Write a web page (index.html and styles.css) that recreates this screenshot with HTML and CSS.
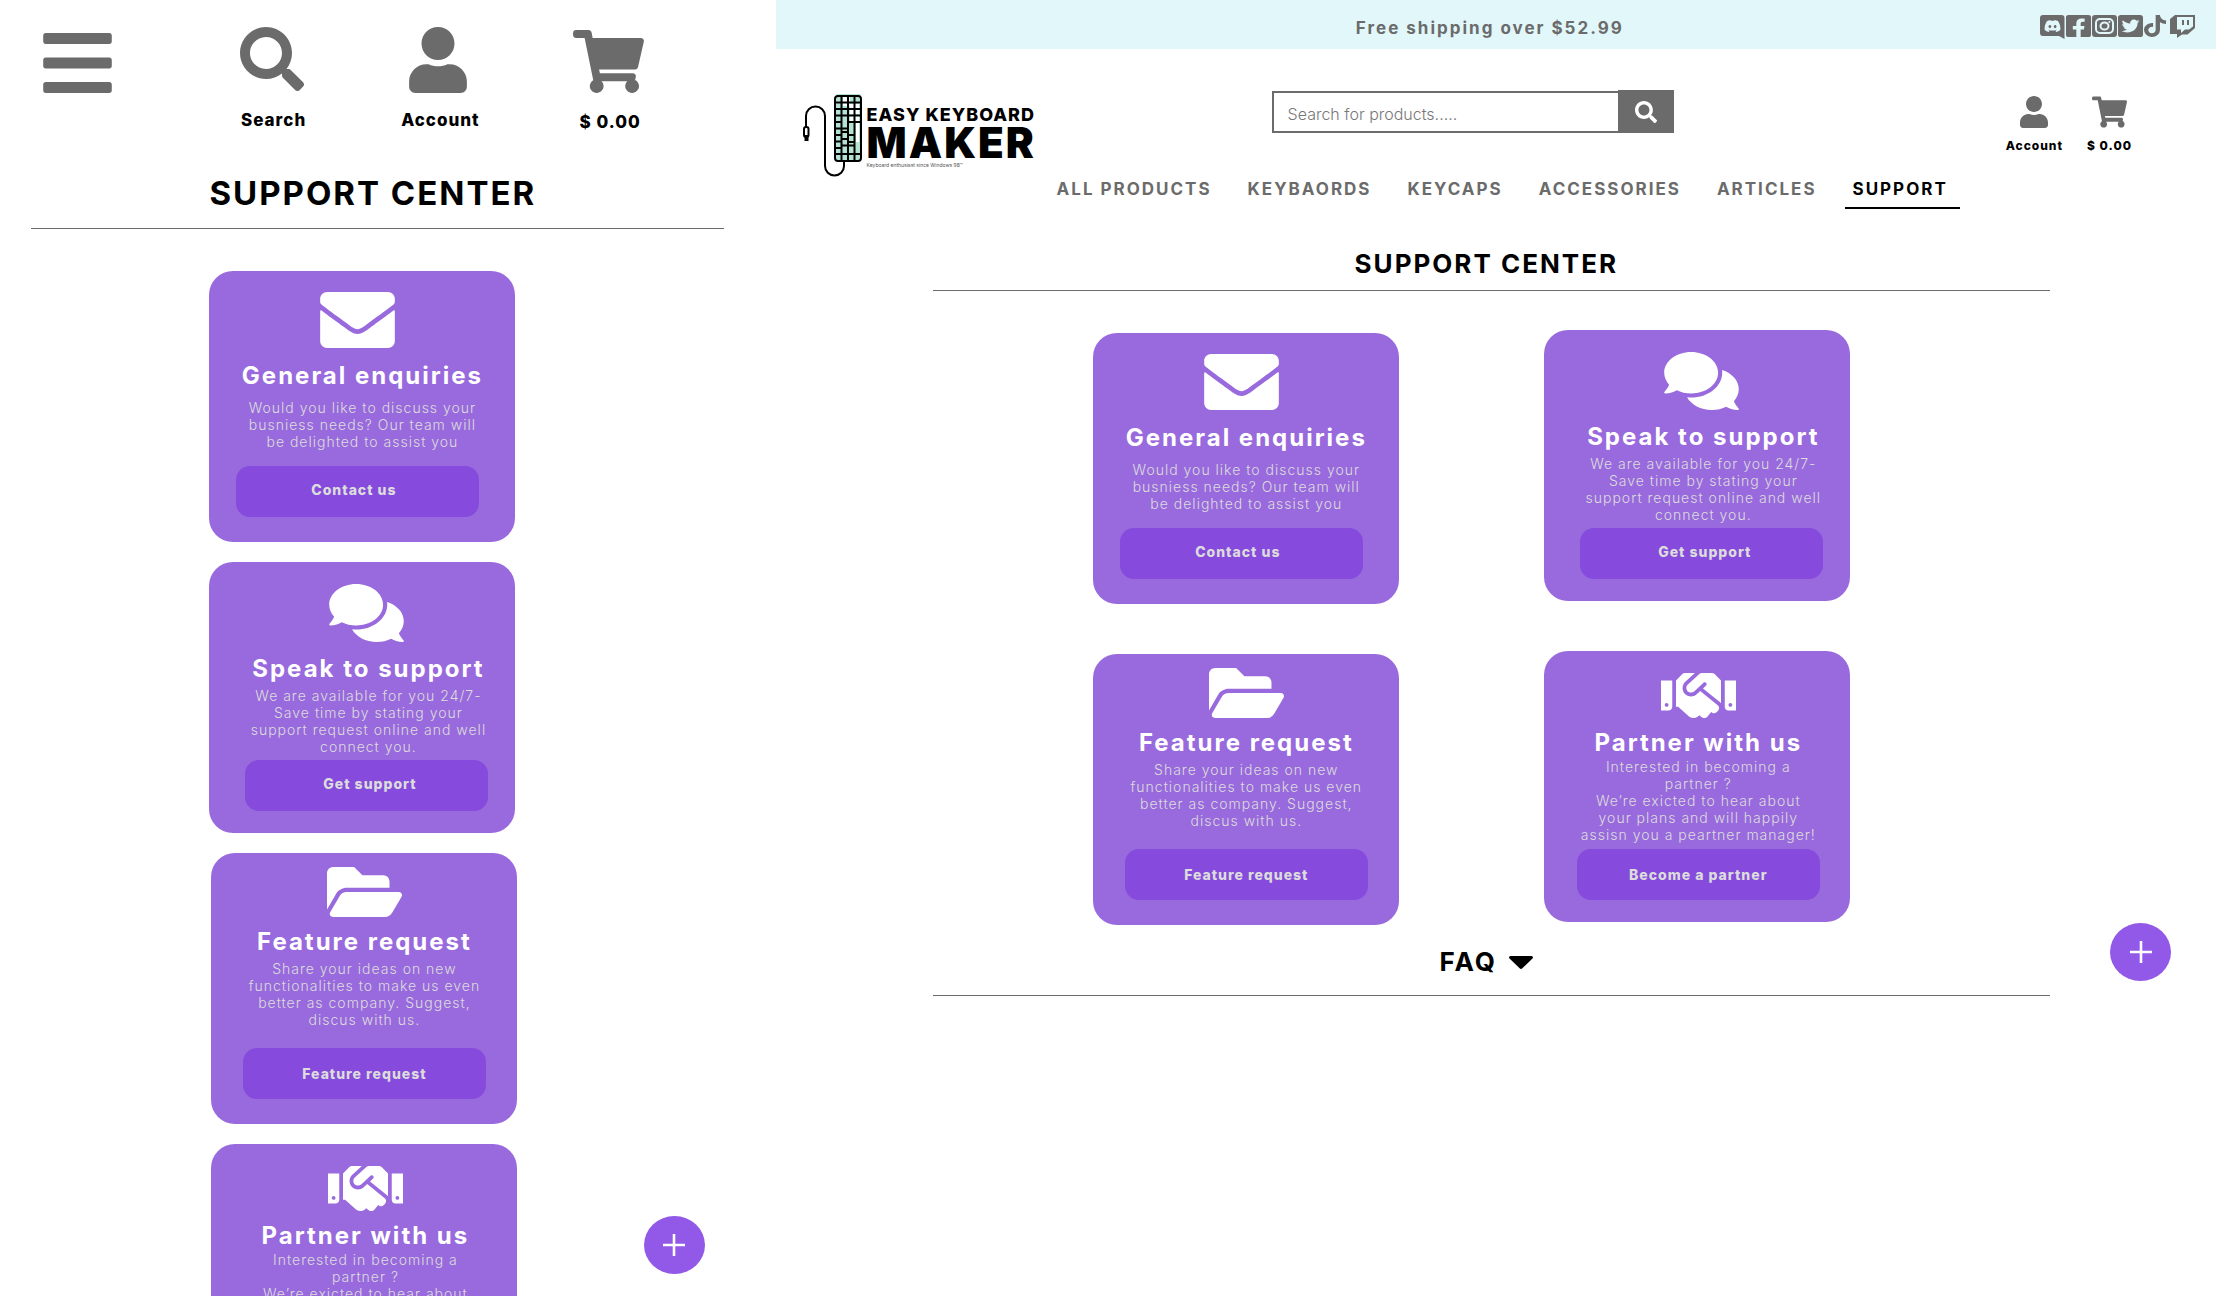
FILE: index.html
```html
<!DOCTYPE html>
<html lang="en">
<head>
<meta charset="utf-8">
<meta name="viewport" content="width=device-width, initial-scale=1">
<title>Support Center - Easy Keyboard Maker</title>
<link rel="stylesheet" href="styles.css">
</head>
<body>
<svg class="sprite" aria-hidden="true">
  <symbol id="bars" viewBox="0 60 448 392"><path d="M16 132h416c8.837 0 16-7.163 16-16V76c0-8.837-7.163-16-16-16H16C7.163 60 0 67.163 0 76v40c0 8.837 7.163 16 16 16zm0 160h416c8.837 0 16-7.163 16-16v-40c0-8.837-7.163-16-16-16H16c-8.837 0-16 7.163-16 16v40c0 8.837 7.163 16 16 16zm0 160h416c8.837 0 16-7.163 16-16v-40c0-8.837-7.163-16-16-16H16c-8.837 0-16 7.163-16 16v40c0 8.837 7.163 16 16 16z"/></symbol>
  <symbol id="search" viewBox="0 0 512 512"><path d="M505 442.7L405.3 343c-4.500-4.500-10.600-7-17-7H372c27.600-35.300 44-79.700 44-128C416 93.100 322.900 0 208 0S0 93.100 0 208s93.100 208 208 208c48.300 0 92.700-16.400 128-44v16.300c0 6.400 2.500 12.500 7 17l99.700 99.700c9.400 9.400 24.600 9.400 33.900 0l28.300-28.300c9.400-9.400 9.400-24.600.1-34zM208 336c-70.700 0-128-57.200-128-128 0-70.700 57.200-128 128-128 70.700 0 128 57.200 128 128 0 70.700-57.200 128-128 128z"/></symbol>
  <symbol id="user" viewBox="0 0 448 512"><path d="M224 256c70.7 0 128-57.3 128-128S294.7 0 224 0 96 57.3 96 128s57.3 128 128 128zm89.6 32h-16.7c-22.2 10.2-46.9 16-72.9 16s-50.6-5.8-72.900-16h-16.700C60.200 288 0 348.200 0 422.400V464c0 26.500 21.500 48 48 48h352c26.500 0 48-21.500 48-48v-41.600c0-74.200-60.200-134.400-134.400-134.400z"/></symbol>
  <symbol id="cart" viewBox="0 0 576 512"><path d="M528.12 301.319l47.273-208C578.806 78.301 567.391 64 551.99 64H159.208l-9.166-44.81C147.758 8.021 137.93 0 126.529 0H24C10.745 0 0 10.745 0 24v16c0 13.255 10.745 24 24 24h69.883l70.248 343.435C147.325 417.1 136 435.222 136 456c0 30.928 25.072 56 56 56s56-25.072 56-56c0-15.674-6.447-29.835-16.824-40h209.647C430.447 426.165 424 440.326 424 456c0 30.928 25.072 56 56 56s56-25.072 56-56c0-22.172-12.888-41.332-31.579-50.405l5.517-24.276c3.413-15.018-8.002-29.319-23.403-29.319H218.117l-6.545-32h293.145c11.206 0 20.92-7.754 23.403-18.681z"/></symbol>
  <symbol id="envelope" viewBox="0 64 512 384"><path d="M502.3 190.8c3.9-3.1 9.7-.2 9.7 4.7V400c0 26.5-21.5 48-48 48H48c-26.5 0-48-21.5-48-48V195.6c0-5 5.7-7.8 9.7-4.7 22.4 17.4 52.1 39.5 154.1 113.6 21.1 15.4 56.7 47.8 92.2 47.6 35.7.3 72-32.8 92.3-47.6 102-74.1 131.6-96.3 154-113.700zM256 320c23.200.4 56.600-29.200 73.400-41.400 132.700-96.300 142.800-104.700 173.400-128.700 5.800-4.500 9.200-11.500 9.200-18.900v-19c0-26.500-21.500-48-48-48H48c-26.500 0-48 21.500-48 48v19c0 7.400 3.400 14.300 9.200 18.900 30.600 23.900 40.700 32.400 173.400 128.700 16.800 12.200 50.200 41.800 73.400 41.400z"/></symbol>
  <symbol id="comments" viewBox="0 32 576 448"><path d="M416 192c0-88.4-93.1-160-208-160S0 103.6 0 192c0 34.3 14.1 65.9 38 92-13.4 30.2-35.5 54.2-35.8 54.5-2.2 2.3-2.8 5.7-1.5 8.7S4.8 352 8 352c36.600 0 66.900-12.300 88.700-25 32.200 15.700 70.300 25 111.300 25 114.900 0 208-71.600 208-160zm122 220c23.900-26 38-57.700 38-92 0-66.900-53.500-124.200-129.300-148.100.9 6.600 1.300 13.300 1.300 20.100 0 105.900-107.700 192-240 192-10.800 0-21.300-.8-31.700-1.900C207.800 439.600 281.800 480 368 480c41 0 79.100-9.200 111.300-25 21.800 12.700 52.100 25 88.700 25 3.200 0 6.100-1.900 7.300-4.800 1.300-2.900.7-6.300-1.500-8.700-.3-.3-22.400-24.200-35.800-54.500z"/></symbol>
  <symbol id="folder" viewBox="0 64 576 384"><path d="M572.694 292.093L500.27 416.248A63.997 63.997 0 0 1 444.989 448H45.025c-18.523 0-30.064-20.093-20.731-36.093l72.424-124.155A64 64 0 0 1 152 256h399.964c18.523 0 30.064 20.093 20.73 36.093zM152 224h328v-48c0-26.51-21.49-48-48-48H272l-64-64H48C21.49 64 0 85.49 0 112v278.046l69.077-118.418C86.214 242.25 117.989 224 152 224z"/></symbol>
  <symbol id="handshake" viewBox="0 64 640 384"><path d="M434.7 64h-85.9c-8 0-15.7 3-21.6 8.4l-98.3 90c-.1.1-.2.3-.3.4-16.6 15.6-16.3 40.5-2.1 56 12.7 13.9 39.4 17.6 56.1 2.7.1-.1.3-.1.4-.2l79.9-73.2c6.5-5.9 16.7-5.5 22.6 1 6 6.5 5.5 16.6-1 22.6l-26.1 23.9L504 313.8c2.9 2.4 5.5 5 7.9 7.7V128l-54.6-54.6c-5.9-6-14.1-9.4-22.6-9.4zM544 128.2v223.9c0 17.7 14.3 32 32 32h64V128.2h-96zm48 223.9c-8.8 0-16-7.2-16-16s7.2-16 16-16 16 7.2 16 16-7.2 16-16 16zM0 384h64c17.7 0 32-14.3 32-32V128.2H0V384zm48-63.9c8.8 0 16 7.2 16 16s-7.2 16-16 16-16-7.2-16-16c0-8.9 7.2-16 16-16zm435.9 18.6L334.6 217.5l-30 27.5c-29.7 27.1-75.2 24.5-101.7-4.4-26.9-29.4-24.8-74.9 4.4-101.7L289.1 64h-83.8c-8.5 0-16.6 3.4-22.6 9.4L128 128v223.9h18.3l90.5 81.9c27.4 22.3 67.7 18.1 90-9.3l.2-.2 17.9 15.5c15.9 13 39.4 10.5 52.3-5.4l31.4-38.6 5.4 4.4c13.7 11.1 33.9 9.1 45-4.7l9.5-11.7c11.2-13.8 9.1-33.9-4.6-45.1z"/></symbol>
  <symbol id="caret" viewBox="11 192 298 169" preserveAspectRatio="none"><path d="M31.3 192h257.3c17.8 0 26.7 21.5 14.1 34.1L174.1 354.8c-7.8 7.8-20.5 7.8-28.3 0L17.2 226.1C4.6 213.5 13.5 192 31.3 192z"/></symbol>
  <symbol id="plus" viewBox="0 0 22 22"><path d="M9.700 0h2.600v9.700H22v2.600h-9.700V22H9.700v-9.700H0V9.700h9.700z"/></symbol>
</svg>

<div class="layout">
  <section class="pane pane--compact" aria-label="Compact view">
    <div class="pane__body">
      <header class="toolbar">
        <button class="tool tool--menu" type="button" aria-label="Menu"><svg width="69" height="60"><use href="#bars"/></svg></button>
        <a class="tool tool--search" href="#search"><svg width="64" height="64"><use href="#search"/></svg><span>Search</span></a>
        <a class="tool tool--account" href="#account"><svg width="58" height="66"><use href="#user"/></svg><span>Account</span></a>
        <a class="tool tool--cart" href="#cart"><svg width="71" height="63"><use href="#cart"/></svg><span>$ 0.00</span></a>
      </header>
      <h1 class="heading heading--large">SUPPORT CENTER</h1>
      <hr class="rule">
      <div class="cards cards--stack">
        <article class="card card--contact">
          <svg class="card__icon" width="75" height="56"><use href="#envelope"/></svg>
          <h2 class="card__title">General enquiries</h2>
          <p class="card__text">Would you like to discuss your<br>busniess needs? Our team will<br>be delighted to assist you</p>
          <button class="card__button" type="button">Contact us</button>
        </article>
        <article class="card card--support">
          <svg class="card__icon" width="75" height="58"><use href="#comments"/></svg>
          <h2 class="card__title">Speak to support</h2>
          <p class="card__text">We are available for you 24/7-<br>Save time by stating your<br>support request online and well<br>connect you.</p>
          <button class="card__button" type="button">Get support</button>
        </article>
        <article class="card card--feature">
          <svg class="card__icon" width="75" height="50"><use href="#folder"/></svg>
          <h2 class="card__title">Feature request</h2>
          <p class="card__text">Share your ideas on new<br>functionalities to make us even<br>better as company. Suggest,<br>discus with us.</p>
          <button class="card__button" type="button">Feature request</button>
        </article>
        <article class="card card--partner">
          <svg class="card__icon" width="75" height="45"><use href="#handshake"/></svg>
          <h2 class="card__title">Partner with us</h2>
          <p class="card__text">Interested in becoming a<br>partner ?<br>We’re exicted to hear about<br>your plans and will happily<br>assisn you a peartner manager!</p>
          <button class="card__button" type="button">Become a partner</button>
        </article>
      </div>
    </div>
    <button class="fab fab--compact" type="button" aria-label="Add"><svg width="22" height="22"><use href="#plus"/></svg></button>
  </section>

  <section class="pane pane--wide" aria-label="Wide view">
    <div class="banner">
      <p class="banner__text">Free shipping over $52.99</p>
      <nav class="social" aria-label="Social media">
        <a href="#discord" aria-label="Discord"><svg width="25" height="24" viewBox="0 0 25 24"><path d="M3 0h18.500a3 3 0 0 1 3 3v21l-5.500-3H3a3 3 0 0 1-3-3V3a3 3 0 0 1 3-3z"/><svg x="4" y="5" width="17" height="12" viewBox="20 32 600 448"><path class="social__cut" d="M524.531,69.836a1.5,1.5,0,0,0-.764-.7A485.065,485.065,0,0,0,404.081,32.03a1.816,1.816,0,0,0-1.923.91,337.461,337.461,0,0,0-14.9,30.6,447.848,447.848,0,0,0-134.426,0,309.541,309.541,0,0,0-15.135-30.6,1.89,1.89,0,0,0-1.924-.91A483.689,483.689,0,0,0,116.085,69.137a1.712,1.712,0,0,0-.788.676C39.068,183.651,18.186,294.69,28.43,404.354a2.016,2.016,0,0,0,.765,1.375A487.666,487.666,0,0,0,176.02,479.918a1.9,1.9,0,0,0,2.063-.676A348.2,348.2,0,0,0,208.12,430.4a1.86,1.86,0,0,0-1.019-2.588,321.173,321.173,0,0,1-45.868-21.853,1.885,1.885,0,0,1-.185-3.126c3.082-2.309,6.166-4.711,9.109-7.137a1.819,1.819,0,0,1,1.9-.256c96.229,43.917,200.41,43.917,295.5,0a1.812,1.812,0,0,1,1.924.233c2.944,2.426,6.027,4.851,9.132,7.16a1.884,1.884,0,0,1-.162,3.126,301.407,301.407,0,0,1-45.89,21.83,1.875,1.875,0,0,0-1,2.611,391.055,391.055,0,0,0,30.014,48.815,1.864,1.864,0,0,0,2.063.7A486.048,486.048,0,0,0,610.7,405.729a1.882,1.882,0,0,0,.765-1.352C623.729,277.594,590.933,167.465,524.531,69.836ZM222.491,337.58c-28.972,0-52.844-26.587-52.844-59.239S193.056,219.1,222.491,219.1c29.665,0,53.306,26.82,52.843,59.239C275.334,310.993,251.924,337.58,222.491,337.58Zm195.38,0c-28.971,0-52.843-26.587-52.843-59.239S388.437,219.1,417.871,219.1c29.667,0,53.307,26.82,52.844,59.239C470.715,310.993,447.538,337.58,417.871,337.58Z"/></svg></svg></a>
        <a href="#facebook" aria-label="Facebook"><svg width="25" height="22" viewBox="0 32 448 448" preserveAspectRatio="none"><path d="M400 32H48A48 48 0 0 0 0 80v352a48 48 0 0 0 48 48h137.25V327.69h-63V256h63v-54.64c0-62.15 37-96.48 93.67-96.48 27.14 0 55.52 4.84 55.52 4.84v61h-31.27c-30.81 0-40.42 19.12-40.42 38.73V256h68.78l-11 71.69h-57.78V480H400a48 48 0 0 0 48-48V80a48 48 0 0 0-48-48z"/></svg></a>
        <a href="#instagram" aria-label="Instagram"><svg width="25" height="22" viewBox="0 0 25 22"><rect width="25" height="22" rx="3"/><rect class="social__line" x="4" y="4" width="17" height="14" rx="4"/><ellipse class="social__line" cx="12.500" cy="11" rx="4" ry="3.600"/><circle class="social__cut" cx="17.300" cy="7" r="1"/></svg></a>
        <a href="#twitter" aria-label="Twitter"><svg width="25" height="22" viewBox="0 32 448 448" preserveAspectRatio="none"><path d="M400 32H48C21.5 32 0 53.5 0 80v352c0 26.5 21.5 48 48 48h352c26.5 0 48-21.5 48-48V80c0-26.5-21.5-48-48-48zm-48.900 158.800c.2 2.800.2 5.700.2 8.500 0 86.700-66 186.600-186.600 186.600-37.200 0-71.700-10.800-100.700-29.400 5.300.6 10.400.8 15.800.8 30.700 0 58.900-10.400 81.400-28-28.800-.6-53-19.500-61.300-45.500 10.100 1.500 19.200 1.500 29.600-1.200-30-6.100-52.500-32.500-52.500-64.400v-.8c8.700 4.900 18.900 7.900 29.600 8.300a65.447 65.447 0 0 1-29.200-54.600c0-12.200 3.200-23.400 8.900-33.100 32.300 39.800 80.800 65.800 135.200 68.600-9.300-44.500 24-80.600 64-80.600 18.900 0 35.900 7.900 47.900 20.700 14.800-2.800 29-8.300 41.600-15.800-4.900 15.200-15.200 28-28.800 36.100 13.200-1.400 26-5.100 37.800-10.200-8.900 13.100-20.100 24.700-32.900 34z"/></svg></a>
        <a href="#tiktok" aria-label="TikTok"><svg width="22" height="22" viewBox="0 0 448 512" preserveAspectRatio="none"><path d="M448,209.91a210.06,210.06,0,0,1-122.77-39.25V349.38A162.55,162.55,0,1,1,185,188.31V278.2a74.62,74.62,0,1,0,52.23,71.18V0l88,0a121.18,121.18,0,0,0,1.86,22.17h0A122.18,122.18,0,0,0,381,102.39a121.43,121.43,0,0,0,67,20.14Z"/></svg></a>
        <a href="#twitch" aria-label="Twitch"><svg width="28" height="24" viewBox="-3 0 28 24"><path fill-rule="evenodd" d="M0 4l5-4h20v13l-7.500 6.500H12L7 23v-4H0zM7 2v12.500h4v3.500l4-3.500h4l4-3V2zM12 5h2v5h-2zM17 5h2v5h-2z"/></svg></a>
      </nav>
    </div>

    <header class="header">
      <a class="logo" href="#home">
        <svg class="logo__art" width="61" height="84" viewBox="0 0 61 84">
          <rect class="logo__mint" x="33" y="0" width="25" height="66" rx="2"/>
          <path class="logo__paper" d="M40 2h7v8h9v10h-9v-8h-7zM52 22h4v26h-3V28h-6v-6z"/>
          <path class="logo__grid" d="M32 8.500h26M32 15h26M32 21.500h26M32 28h7M45 28h13M32 34.500h13M32 41h7M39 38h6M45 41h7M32 47.500h7M39 45h6M45 48h7M32 54h7M39 51.500h13M32 60h26M38.500 2v65M45 2v65M51.500 2v65"/>
          <rect class="logo__frame" x="32" y="2" width="26" height="65" rx="3"/>
          <path class="logo__cable" d="M3 33V22a9.500 9.500 0 0 1 19 0v50a9.500 9.500 0 0 0 19 0v-4"/>
          <rect class="logo__cable" x="1" y="33" width="4.500" height="10" rx="2"/>
          <path d="M1.500 41h4v6h-4z"/>
        </svg>
        <span class="logo__words">
          <span class="logo__top">EASY KEYBOARD</span>
          <span class="logo__main">MAKER</span>
          <span class="logo__tag">Keyboard enthusiast since Windows 98™</span>
        </span>
      </a>
      <form class="search" role="search">
        <input class="search__input" type="search" aria-label="Search for products" placeholder="Search for products.....">
        <button class="search__button" type="submit" aria-label="Search"><svg width="22" height="22"><use href="#search"/></svg></button>
      </form>
      <div class="actions">
        <a class="action" href="#account"><svg width="28" height="32"><use href="#user"/></svg><span>Account</span></a>
        <a class="action" href="#cart"><svg width="35" height="32"><use href="#cart"/></svg><span>$ 0.00</span></a>
      </div>
      <nav class="menu" aria-label="Main">
        <a class="menu__link" href="#products">ALL PRODUCTS</a>
        <a class="menu__link" href="#keyboards">KEYBAORDS</a>
        <a class="menu__link" href="#keycaps">KEYCAPS</a>
        <a class="menu__link" href="#accessories">ACCESSORIES</a>
        <a class="menu__link" href="#articles">ARTICLES</a>
        <a class="menu__link menu__link--current" href="#support" aria-current="page">SUPPORT</a>
      </nav>
    </header>

    <main class="content">
      <h1 class="heading">SUPPORT CENTER</h1>
      <hr class="rule">
      <div class="cards cards--grid">
        <div class="cards__column">
          <article class="card card--contact">
            <svg class="card__icon" width="75" height="56"><use href="#envelope"/></svg>
            <h2 class="card__title">General enquiries</h2>
            <p class="card__text">Would you like to discuss your<br>busniess needs? Our team will<br>be delighted to assist you</p>
            <button class="card__button" type="button">Contact us</button>
          </article>
          <article class="card card--feature">
            <svg class="card__icon" width="75" height="50"><use href="#folder"/></svg>
            <h2 class="card__title">Feature request</h2>
            <p class="card__text">Share your ideas on new<br>functionalities to make us even<br>better as company. Suggest,<br>discus with us.</p>
            <button class="card__button" type="button">Feature request</button>
          </article>
        </div>
        <div class="cards__column">
          <article class="card card--support">
            <svg class="card__icon" width="75" height="58"><use href="#comments"/></svg>
            <h2 class="card__title">Speak to support</h2>
            <p class="card__text">We are available for you 24/7-<br>Save time by stating your<br>support request online and well<br>connect you.</p>
            <button class="card__button" type="button">Get support</button>
          </article>
          <article class="card card--partner">
            <svg class="card__icon" width="75" height="45"><use href="#handshake"/></svg>
            <h2 class="card__title">Partner with us</h2>
            <p class="card__text">Interested in becoming a<br>partner ?<br>We’re exicted to hear about<br>your plans and will happily<br>assisn you a peartner manager!</p>
            <button class="card__button" type="button">Become a partner</button>
          </article>
        </div>
      </div>
      <button class="heading faq" type="button" aria-expanded="false">FAQ<svg width="24" height="13"><use href="#caret"/></svg></button>
      <hr class="rule">
    </main>
    <button class="fab fab--wide" type="button" aria-label="Add"><svg width="22" height="22"><use href="#plus"/></svg></button>
  </section>
</div>
</body>
</html>
```
FILE: styles.css
```css
* {
  box-sizing: border-box;
}

:root {
  --grey: #6b6b6b;
  --ice: #e1f7fa;
  --violet: #996add;
  --violet-deep: #864bdc;
  --violet-bright: #9258e8;
}

body {
  margin: 0;
  background: #fff;
  color: #000;
  font-family: Inter, "Liberation Sans", sans-serif;
}

h1, h2, p {
  margin: 0;
}

a {
  color: inherit;
  text-decoration: none;
}

button {
  padding: 0;
  border: 0;
  background: none;
  color: inherit;
  font: inherit;
  cursor: pointer;
}

svg {
  display: block;
  flex: none;
  fill: currentColor;
}

.sprite {
  position: absolute;
  width: 0;
  height: 0;
}

.layout {
  display: grid;
  grid-template-columns: 35fr 65fr;
  height: 100vh;
}

.pane {
  position: relative;
  min-width: 0;
  min-height: 0;
}

.pane__body {
  height: 100%;
  overflow: hidden auto;
  scrollbar-width: none;
}

/* Compact view */
.toolbar {
  display: flex;
  align-items: flex-start;
  padding: 27px 0 0 43px;
}

.tool {
  display: flex;
  flex-direction: column;
  align-items: center;
  gap: 18px;
  color: var(--grey);
}

.tool span {
  padding-left: 4px;
  color: #000;
  font-size: 17px;
  font-weight: 800;
  line-height: 22px;
  letter-spacing: 1px;
}

.tool--menu {
  margin-top: 6px;
}

.tool--search {
  margin-left: 125px;
}

.tool--account {
  gap: 16px;
  margin-left: 91px;
}

.tool--cart {
  margin: 3px 0 0 93px;
}

.heading {
  font-size: 26px;
  font-weight: 700;
  line-height: 32px;
  letter-spacing: 2px;
  text-align: center;
}

.heading--large {
  margin-top: 40px;
  padding-right: 30px;
  font-size: 33px;
  line-height: 40px;
}

.rule {
  margin: 0;
  border: 0;
  border-top: 1px solid var(--grey);
}

.pane--compact .rule {
  margin: 15px 52px 0 31px;
}

.cards--stack {
  display: flex;
  flex-direction: column;
  gap: 20px;
  margin: 42px 0 20px 27%;
}

.cards--stack .card--feature,
.cards--stack .card--partner {
  margin-left: 2px;
}

/* Cards */
.card {
  display: flex;
  flex-direction: column;
  align-items: center;
  width: 306px;
  height: 271px;
  border-radius: 24px;
  background: var(--violet);
  color: #fff;
}

.card__title {
  font-size: 24px;
  font-weight: 700;
  line-height: 30px;
  letter-spacing: 2px;
  white-space: nowrap;
}

.card__text {
  color: #dcdcdc;
  font-size: 14px;
  font-weight: 300;
  line-height: 17px;
  letter-spacing: 1px;
  text-align: center;
  white-space: nowrap;
}

.card__button {
  width: 243px;
  height: 51px;
  margin-top: auto;
  border-radius: 14px;
  background: var(--violet-deep);
  color: #dcdcdc;
  font-size: 14px;
  font-weight: 800;
  letter-spacing: 1px;
}

.card--contact {
  padding: 21px 0 25px;
}

.card--support {
  padding: 22px 0 22px 12px;
}

.card--feature {
  padding: 14px 0 25px;
}

.card--partner {
  padding: 22px 0 22px 2px;
}

.card--contact .card__icon {
  margin: 0 9px 13px 0;
}

.card--support .card__icon {
  margin: 0 3px 12px 0;
}

.card--feature .card__icon,
.card--partner .card__icon {
  margin-bottom: 10px;
}

.card--contact .card__button {
  margin-right: 9px;
  padding: 0 8px 5px 0;
}

.card--support .card__button {
  margin-right: 3px;
  padding: 0 0 5px 6px;
}

.card--contact .card__text {
  margin-top: 8px;
}

.card--support .card__text,
.card--feature .card__text {
  margin-top: 3px;
}

/* Wide view */
.banner {
  display: grid;
  grid-template-columns: 1fr auto 1fr;
  align-items: center;
  height: 49px;
  padding: 0 21px 0 9px;
  background: var(--ice);
  color: var(--grey);
}

.banner__text {
  grid-column: 2;
  padding-top: 6px;
  font-size: 17px;
  font-weight: 700;
  line-height: 24px;
  letter-spacing: 2px;
}

.social {
  display: flex;
  justify-content: flex-end;
  gap: 1px;
  padding-top: 4px;
}

.social__cut {
  fill: var(--ice);
}

.social__line {
  fill: none;
  stroke: var(--ice);
  stroke-width: 2;
}

.header {
  display: grid;
  grid-template-columns: auto 1fr auto;
  grid-template-rows: 61px auto;
  align-items: start;
  row-gap: 26px;
  padding: 41px 84px 0 27px;
}

.logo {
  display: flex;
  grid-row: 1 / 3;
  gap: 3px;
  width: 246px;
  padding-top: 4px;
}

.logo__mint {
  fill: #b4e2d4;
}

.logo__paper {
  fill: #fff;
}

.logo__grid,
.logo__frame,
.logo__cable {
  fill: none;
  stroke: #000;
  stroke-width: 2;
}

.logo__words {
  display: flex;
  flex-direction: column;
  padding-top: 12px;
  white-space: nowrap;
}

.logo__top {
  font-size: 18px;
  font-weight: 800;
  line-height: 18px;
  letter-spacing: 1px;
}

.logo__main {
  font-size: 42px;
  font-weight: 900;
  line-height: 38px;
  letter-spacing: 2px;
}

.logo__tag {
  color: #555;
  font-size: 5px;
  line-height: 6px;
}

.search {
  display: flex;
  align-items: flex-end;
  width: 402px;
  margin-left: 223px;
}

.search__input {
  flex: 1;
  min-width: 0;
  height: 42px;
  padding: 4px 14px 0;
  border: 2px solid var(--grey);
  border-right: 0;
  border-radius: 0;
  background: #fff;
  font: 300 16px/20px Inter, "Liberation Sans", sans-serif;
  appearance: none;
}

.search__input::placeholder {
  color: #777;
}

.search__button {
  display: grid;
  place-items: center;
  width: 56px;
  height: 43px;
  background: var(--grey);
  color: #fff;
}

.actions {
  display: flex;
  gap: 24px;
  padding-top: 6px;
}

.action {
  display: flex;
  flex-direction: column;
  align-items: center;
  gap: 10px;
  color: var(--grey);
}

.action span {
  color: #000;
  font-size: 12px;
  font-weight: 800;
  line-height: 16px;
  letter-spacing: 1px;
}

.menu {
  display: flex;
  grid-column: 2 / 4;
  gap: 16px;
}

.menu__link {
  padding: 0 12px 6px 8px;
  border-bottom: 2px solid transparent;
  color: var(--grey);
  font-size: 17px;
  font-weight: 700;
  line-height: 24px;
  letter-spacing: 2px;
  white-space: nowrap;
}

.menu__link--current {
  border-bottom-color: #000;
  color: #000;
}

.content {
  padding: 39px 166px 0 157px;
}

.content .heading {
  padding-right: 10px;
}

.content .rule {
  margin-top: 10px;
}

.cards--grid {
  display: flex;
  justify-content: center;
  align-items: flex-start;
  gap: 145px;
  margin-top: 39px;
  padding-right: 39px;
}

.cards__column {
  display: grid;
  gap: 50px;
}

.cards__column:first-child {
  padding-top: 3px;
}

.faq {
  display: flex;
  align-items: center;
  gap: 12px;
  margin: 21px auto 0;
}

.content .faq + .rule {
  margin-top: 17px;
}

.fab {
  position: absolute;
  display: grid;
  place-items: center;
  width: 61px;
  height: 58px;
  border-radius: 50%;
  background: var(--violet-bright);
  color: #fff;
}

.fab--compact {
  right: 71px;
  bottom: 22px;
}

.fab--wide {
  right: 45px;
  top: 923px;
}
```
